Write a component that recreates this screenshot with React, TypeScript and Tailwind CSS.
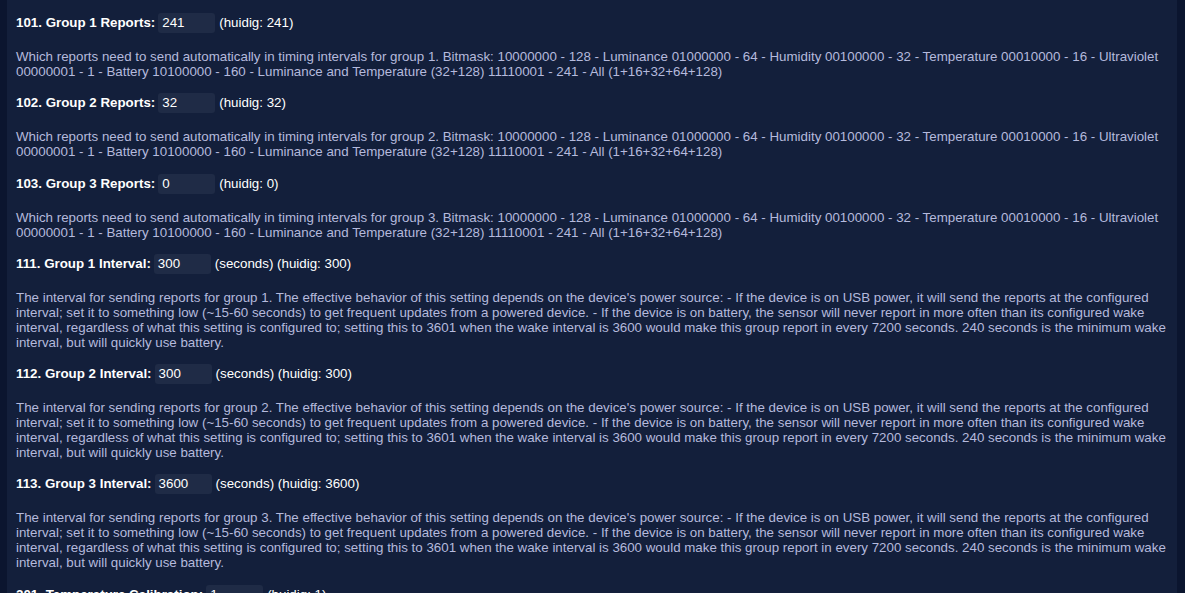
import React from "react";

const reportsDesc = (g: number) =>
  `Which reports need to send automatically in timing intervals for group ${g}. Bitmask: 10000000 - 128 - Luminance 01000000 - 64 - Humidity 00100000 - 32 - Temperature 00010000 - 16 - Ultraviolet 00000001 - 1 - Battery 10100000 - 160 - Luminance and Temperature (32+128) 11110001 - 241 - All (1+16+32+64+128)`;

const intervalDesc = (g: number) =>
  `The interval for sending reports for group ${g}. The effective behavior of this setting depends on the device's power source: - If the device is on USB power, it will send the reports at the configured interval; set it to something low (~15-60 seconds) to get frequent updates from a powered device. - If the device is on battery, the sensor will never report in more often than its configured wake interval, regardless of what this setting is configured to; setting this to 3601 when the wake interval is 3600 would make this group report in every 7200 seconds. 240 seconds is the minimum wake interval, but will quickly use battery.`;

type Item = { label: string; value: string; unit?: string; desc?: string };

const items: Item[] = [
  { label: "101. Group 1 Reports:", value: "241", desc: reportsDesc(1) },
  { label: "102. Group 2 Reports:", value: "32", desc: reportsDesc(2) },
  { label: "103. Group 3 Reports:", value: "0", desc: reportsDesc(3) },
  { label: "111. Group 1 Interval:", value: "300", unit: "(seconds) ", desc: intervalDesc(1) },
  { label: "112. Group 2 Interval:", value: "300", unit: "(seconds) ", desc: intervalDesc(2) },
  { label: "113. Group 3 Interval:", value: "3600", unit: "(seconds) ", desc: intervalDesc(3) },
  { label: "201. Temperature Calibration:", value: "1" },
];

function Row({ item }: { item: Item }) {
  return (
    <div className="mb-[14.3px]">
      <div className="flex h-[20px] items-center text-[13.33px] text-white">
        <span className="font-bold">{item.label}</span>
        <div className="ml-[3px] flex h-[20px] w-[57px] items-center rounded-[3px] bg-[#1f2b46] pl-[4px] text-[13.33px] text-white">
          {item.value}
        </div>
        <span className="ml-[4px]">
          {item.unit ?? ""}(huidig: {item.value})
        </span>
      </div>
      {item.desc && (
        <p className="mt-[16px] text-[13.33px] leading-[15px] text-[#b5badd]">{item.desc}</p>
      )}
    </div>
  );
}

export default function App() {
  return (
    <div
      className="flex h-[593px] overflow-hidden bg-[#0b152f] px-[7px]"
      style={{ fontFamily: '"Liberation Sans", Arial, sans-serif' }}
    >
      <div className="flex-1 bg-[#131f3b] pl-[9px] pr-[9px] pt-[13px]">
        {items.map((it) => (
          <Row key={it.label} item={it} />
        ))}
      </div>
      <div className="w-[1px]" />
    </div>
  );
}
